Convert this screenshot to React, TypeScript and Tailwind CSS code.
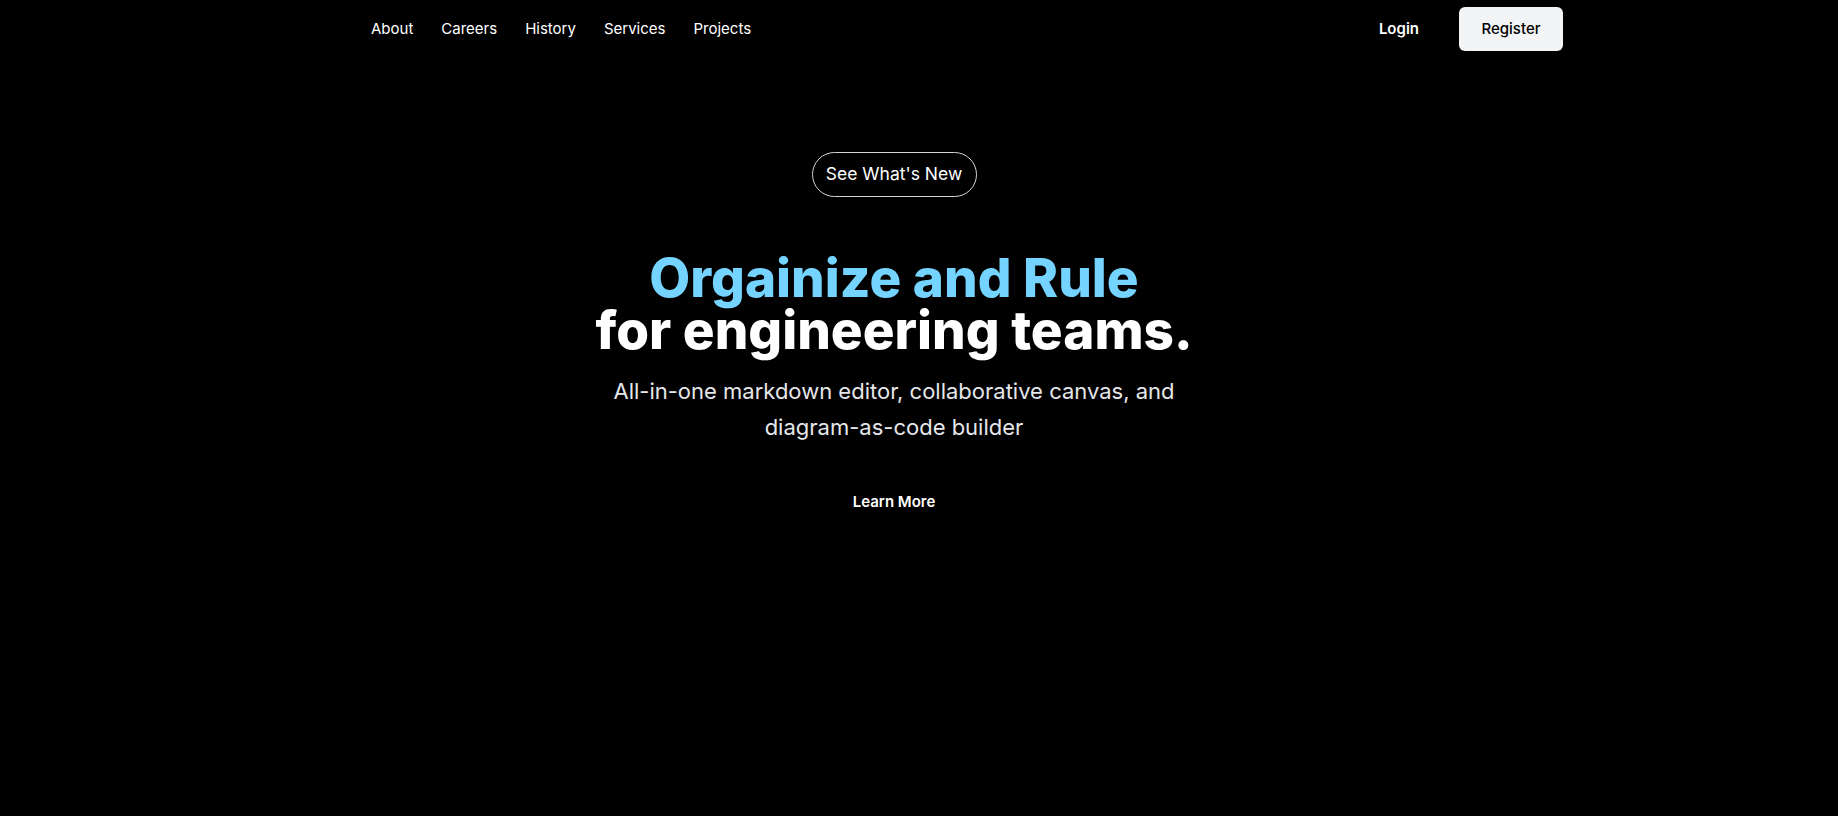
import React from 'react';

const links = ['About', 'Careers', 'History', 'Services', 'Projects'];

const App: React.FC = () => {
    return (
        <div className="min-h-screen w-full bg-black text-white font-['Inter','Liberation_Sans',sans-serif]">
            <header className="mx-auto flex h-[58px] w-full max-w-[1288px] items-center justify-between">
                <nav className="flex items-center gap-[28px] pl-[96px] text-[15px]">
                    {links.map(link => (
                        <a key={link} href="#" className="text-white hover:text-gray-300 transition-colors">
                            {link}
                        </a>
                    ))}
                </nav>
                <div className="flex items-center gap-[40px]">
                    <a href="#" className="text-[15px] font-semibold text-white">Login</a>
                    <button className="h-[44px] w-[104px] rounded-md bg-gray-100 text-[15px] font-medium text-black hover:bg-gray-200 transition-colors">
                        Register
                    </button>
                </div>
            </header>

            <main className="flex flex-col items-center pr-[50px] text-center">
                <button className="mt-[94px] h-[45px] w-[165px] rounded-full border border-gray-300 text-[17.5px] text-white">
                    See What's New
                </button>
                <h1 className="mt-[55px] text-[53px] font-extrabold leading-[52px]">
                    <span className="block text-sky-300">Orgainize and Rule</span>
                    <span className="block text-white">for engineering teams.</span>
                </h1>
                <p className="mt-[17px] max-w-xl text-[22px] leading-9 text-gray-200">
                    All-in-one markdown editor, collaborative canvas, and diagram-as-code builder
                </p>
                <a href="#" className="mt-[45px] text-[15px] font-semibold leading-6 text-white">
                    Learn More
                </a>
            </main>
        </div>
    );
};

export default App;
